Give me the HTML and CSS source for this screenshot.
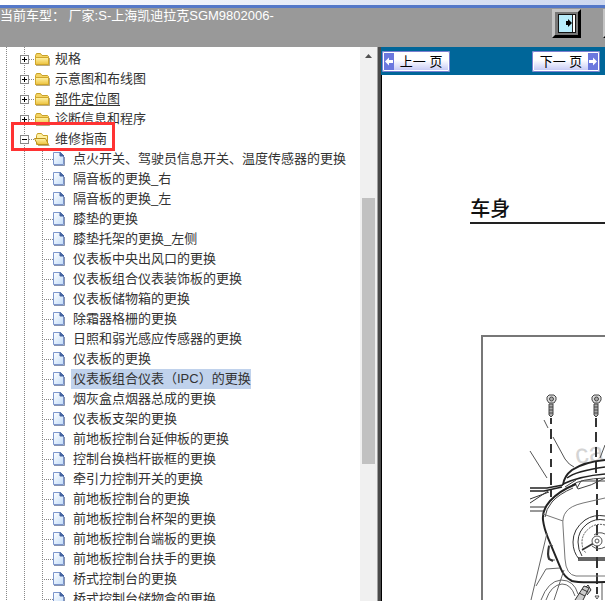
FILE: index.html
```html
<!DOCTYPE html>
<html lang="zh-CN">
<head>
<meta charset="utf-8">
<title>维修手册</title>
<link rel="stylesheet" href="styles.css">
</head>
<body>
<svg class="defs" aria-hidden="true">
  <defs>
    <linearGradient id="gold" x1="0" y1="0" x2="0" y2="1"><stop offset="0" stop-color="#fff3a8"/><stop offset="1" stop-color="#edc23c"/></linearGradient>
    <linearGradient id="paper" x1="0" y1="0" x2="1" y2="1"><stop offset="0" stop-color="#fff"/><stop offset="1" stop-color="#c3dcf8"/></linearGradient>
    <symbol id="folder" viewBox="0 0 16 14">
      <path d="M1.5 12.5v-9l1-2h4l1.5 2h5.500l1 1v8z" fill="#f3d364" stroke="#c9a227"/>
      <path d="M1.500 5.500h13v7h-13z" fill="url(#gold)" stroke="#d0a62a"/>
      <path d="M2 13.500h13.500V6" fill="none" stroke="#8a7230" stroke-opacity=".6"/>
    </symbol>
    <symbol id="folder-open" viewBox="0 0 16 14">
      <path d="M2.500 12.500v-9l1-2h4l1.500 2h4.500v9z" fill="#fff0a0" stroke="#c9a227"/>
      <path d="M.5 6.500h11l3 6h-11z" fill="url(#gold)" stroke="#b98f1c"/>
      <path d="M4 13.500h11.500" fill="none" stroke="#8a7230" stroke-opacity=".6"/>
    </symbol>
    <symbol id="page" viewBox="0 0 12 14">
      <path d="M.5.5h7l3 3v9H.5z" fill="url(#paper)" stroke="#7b95cc"/>
      <path d="M7 .5v3.500h4z" fill="#44639f" stroke="#44639f"/>
      <path d="M1 13.500h10.500V5" fill="none" stroke="#55658a" stroke-opacity=".7"/>
    </symbol>
  </defs>
</svg>
<div class="app">
  <div class="strip"></div>
  <header class="header">
    <p class="vehicle">当前车型： 厂家:S-上海凯迪拉克SGM9802006-</p>
    <div class="tools">
      <button class="tool" aria-label="退出">
        <svg width="18" height="19" viewBox="0 0 18 19"><path d="M0 0h18v19H0z" fill="#111"/><path d="M1 1h14v17H1z" fill="#b8ecfb"/><path d="M15 1h2v17h-2z" fill="#fff"/><path d="M14 1h1v17h-1z" fill="#222"/><path d="M8 7h2V5l4 4-4 4v-2H8z" fill="#000"/></svg>
      </button>
      <button class="tool" aria-label="帮助"></button>
    </div>
  </header>
  <main class="main">
    <nav class="tree-pane">
      <ul class="tree">
        <li><div class="row"><button class="toggle plus" aria-label="展开"></button><svg class="folder"><use href="#folder"/></svg><a href="#">规格</a></div></li>
        <li><div class="row"><button class="toggle plus" aria-label="展开"></button><svg class="folder"><use href="#folder"/></svg><a href="#">示意图和布线图</a></div></li>
        <li><div class="row"><button class="toggle plus" aria-label="展开"></button><svg class="folder"><use href="#folder"/></svg><a class="hover" href="#">部件定位图</a></div></li>
        <li><div class="row"><button class="toggle plus" aria-label="展开"></button><svg class="folder"><use href="#folder"/></svg><a href="#">诊断信息和程序</a></div></li>
        <li>
          <div class="row marked"><button class="toggle" aria-label="折叠"></button><svg class="folder"><use href="#folder-open"/></svg><a href="#">维修指南</a></div>
          <ul class="leaves">
            <li class="leaf"><svg class="page"><use href="#page"/></svg><a href="#">点火开关、驾驶员信息开关、温度传感器的更换</a></li>
            <li class="leaf"><svg class="page"><use href="#page"/></svg><a href="#">隔音板的更换_右</a></li>
            <li class="leaf"><svg class="page"><use href="#page"/></svg><a href="#">隔音板的更换_左</a></li>
            <li class="leaf"><svg class="page"><use href="#page"/></svg><a href="#">膝垫的更换</a></li>
            <li class="leaf"><svg class="page"><use href="#page"/></svg><a href="#">膝垫托架的更换_左侧</a></li>
            <li class="leaf"><svg class="page"><use href="#page"/></svg><a href="#">仪表板中央出风口的更换</a></li>
            <li class="leaf"><svg class="page"><use href="#page"/></svg><a href="#">仪表板组合仪表装饰板的更换</a></li>
            <li class="leaf"><svg class="page"><use href="#page"/></svg><a href="#">仪表板储物箱的更换</a></li>
            <li class="leaf"><svg class="page"><use href="#page"/></svg><a href="#">除霜器格栅的更换</a></li>
            <li class="leaf"><svg class="page"><use href="#page"/></svg><a href="#">日照和弱光感应传感器的更换</a></li>
            <li class="leaf"><svg class="page"><use href="#page"/></svg><a href="#">仪表板的更换</a></li>
            <li class="leaf"><svg class="page"><use href="#page"/></svg><a class="selected" href="#">仪表板组合仪表（IPC）的更换</a></li>
            <li class="leaf"><svg class="page"><use href="#page"/></svg><a href="#">烟灰盒点烟器总成的更换</a></li>
            <li class="leaf"><svg class="page"><use href="#page"/></svg><a href="#">仪表板支架的更换</a></li>
            <li class="leaf"><svg class="page"><use href="#page"/></svg><a href="#">前地板控制台延伸板的更换</a></li>
            <li class="leaf"><svg class="page"><use href="#page"/></svg><a href="#">控制台换档杆嵌框的更换</a></li>
            <li class="leaf"><svg class="page"><use href="#page"/></svg><a href="#">牵引力控制开关的更换</a></li>
            <li class="leaf"><svg class="page"><use href="#page"/></svg><a href="#">前地板控制台的更换</a></li>
            <li class="leaf"><svg class="page"><use href="#page"/></svg><a href="#">前地板控制台杯架的更换</a></li>
            <li class="leaf"><svg class="page"><use href="#page"/></svg><a href="#">前地板控制台端板的更换</a></li>
            <li class="leaf"><svg class="page"><use href="#page"/></svg><a href="#">前地板控制台扶手的更换</a></li>
            <li class="leaf"><svg class="page"><use href="#page"/></svg><a href="#">桥式控制台的更换</a></li>
            <li class="leaf"><svg class="page"><use href="#page"/></svg><a href="#">桥式控制台储物盒的更换</a></li>
          </ul>
        </li>
      </ul>
      <div class="scrollbar">
        <svg class="arrow" width="17" height="17" viewBox="0 0 17 17"><path d="M5 11l3.500-4 3.500 4z" fill="#505050"/></svg>
        <div class="track"><div class="thumb"></div></div>
      </div>
    </nav>
    <section class="doc">
      <div class="pager">
        <button class="nav"><svg class="cap" viewBox="0 0 10 17"><path d="M0 0h10v17H0z" fill="#6b78de"/><path d="M1 8.500l4-4v2.500h4v3H5v2.500z" fill="#fff"/></svg><span>上一 页</span></button>
        <button class="nav"><span>下一 页</span><svg class="cap" viewBox="0 0 10 17"><path d="M0 0h10v17H0z" fill="#6b78de"/><path d="M9 8.500l-4-4v2.500H1v3h4v2.500z" fill="#fff"/></svg></button>
      </div>
      <article class="sheet">
        <h1>车身</h1>
        <div class="figure">
          <svg width="122" height="263" viewBox="483 338 122 263" fill="none" stroke="#555" stroke-width="1">
            <g transform="rotate(-8 590 455)"><text class="watermark" x="575" y="463">ca</text></g>
            <g id="bolt" stroke="#444">
              <path d="M549 405h4v11l-2 2-2-2z" fill="#aaa"/><path d="M549 408h4M549 411h4M549 414h4"/>
              <path d="M547 398l2-2h5l2 2v3l-2 3h-5l-2-3z" fill="#ddd"/><circle cx="551.500" cy="400" r="2" fill="#aaa"/>
            </g>
            <use href="#bolt" x="45"/>
            <path d="M551 419v6M551 430v10M551 445v9M551 460v8M551 474v12M551 490v8" stroke="#333" stroke-width="2"/>
            <path d="M596 419v9M596 433v10M596 448v10M596 463v11M597 479v11M597 495v11M597 511v10M597 526v10M597 542v10M597 558v11M597 574v11M597 588v7" stroke="#333" stroke-width="2"/>
            <path d="M544 421l4 8M553 438l12 22q4 6 9 8M530 452l17 27M600 459l5-13"/>
            <path d="M563 486q1-9 9-15 12-8 33-10" stroke="#222" stroke-width="2"/>
            <path d="M567 479q9-7 38-11M563 485q17-8 42-10" stroke="#222" stroke-width="1.500"/>
            <path d="M572 486q8-6 33-7M577 489l4-7h24M575 484l3 6q13-3 27-11M565 488l11-7" stroke="#444"/>
            <path d="M530 489h17l16-3M530 492h14l18-4" stroke="#222" stroke-width="1.500"/>
            <path d="M530 500l19-7M530 504l18-12M530 508h16M530 512h14" stroke="#333"/>
            <path d="M576 485q-17 7-26 17-8 9-7 19 1 8 5 18l13 31q3 8 11 12 6 2 33 1" stroke="#222" stroke-width="2"/>
            <path d="M573 489q-14 6-21 14-6 7-7 15" stroke="#444"/>
            <path d="M605 499l-22 5q-13 3-17 9-4 5-3 14l2 33q1 16 11 17h29M543 515l20 7" stroke="#777"/>
            <path d="M605 517q-11-2-20 4-12 9-12 22 0 10 6 17M605 521q-10-2-18 4-9 7-9 18 0 8 4 14" stroke="#333"/>
            <path d="M605 526q-8-2-14 2-9 6-9 15 0 7 4 11" stroke="#555" stroke-dasharray="2 1"/>
            <path d="M578 559h27M578 561h27M582 551l12-7" stroke="#333" stroke-width="1.500"/>
            <circle cx="597" cy="542" r="5" fill="#fff"/><circle cx="597" cy="542" r="2"/>
            <path d="M605 535q-6-3-11 1M605 548q-7 4-13-1"/>
            <path d="M547 534l-16 67M536 587l10-17 14-1M549 546q-1 12 1 15h5M550 545l3 2" stroke="#666"/>
            <path d="M549 547q-2 9 0 13l4 2" stroke="#333" stroke-width="2"/>
            <path d="M541 601q7-19 20-20 13 0 17 14M546 601q5-15 16-16 9 0 13 12M564 571l-10 30" stroke="#666"/>
            <path d="M575 601l9-14 5 2-6 12M579 594l6 3M582 590l6 3M586 588l2-2 3 5-4 5" stroke="#333" fill="#ccc"/>
            <path d="M602 584v17M595 597l2 3 2-3z" stroke="#555"/>
          </svg>
        </div>
      </article>
    </section>
  </main>
</div>
</body>
</html>
```

FILE: styles.css
```css
*,
*::after {
  box-sizing: border-box;
}

body {
  margin: 0;
  background: #fff;
  color: #333;
  font: 13px/20px "Liberation Sans", "Noto Sans CJK SC", sans-serif;
}

button {
  margin: 0;
  padding: 0;
  font: inherit;
  color: inherit;
}

ul {
  margin: 0;
  padding: 0;
  list-style: none;
}

a {
  color: inherit;
  text-decoration: none;
}

svg {
  flex: none;
  display: block;
}

.defs {
  position: absolute;
  width: 0;
  height: 0;
}

.app {
  display: flex;
  flex-direction: column;
  height: 100vh;
  overflow: hidden;
}

.strip {
  flex: none;
  height: 8px;
  background: linear-gradient(90deg, #fff, #cdd8f0);
  border-bottom: 3px solid #5478c8;
}

.header {
  flex: none;
  display: flex;
  justify-content: space-between;
  height: 39px;
  background: #999;
  color: #fff;
  overflow: hidden;
}

.vehicle {
  margin: 0;
  line-height: 16px;
  white-space: nowrap;
}

.tools {
  display: flex;
  gap: 22px;
  width: 53px;
  padding-top: 1px;
}

.tool {
  flex: none;
  display: grid;
  place-items: center;
  width: 29px;
  height: 29px;
  background: #777;
  border: 3px solid #000;
  border-top-color: #c4c4c4;
  border-left-color: #c4c4c4;
}

.main {
  flex: 1;
  display: flex;
  min-height: 0;
}

.tree-pane {
  flex: none;
  display: flex;
  width: 63%;
  min-height: 0;
  border-right: 3px solid #4a4a4a;
  box-shadow: 1px 0 #000;
}

.tree {
  flex: 1;
  min-width: 0;
  overflow: hidden;
  padding: 2px 0 0 20px;
  background:
    repeating-linear-gradient(#888 0 1px, transparent 1px 2px) 6px 0 / 1px 100% no-repeat,
    repeating-linear-gradient(#888 0 1px, transparent 1px 2px) 24px 0 / 1px 100% no-repeat;
}

.row,
.leaf {
  position: relative;
  display: flex;
  align-items: center;
  height: 20px;
  white-space: nowrap;
}

.toggle {
  width: 9px;
  height: 9px;
  border: 1px solid #888;
  background: linear-gradient(#000, #000) 1px 3px / 5px 1px no-repeat, #fff;
}

.toggle.plus {
  background:
    linear-gradient(#000, #000) 1px 3px / 5px 1px no-repeat,
    linear-gradient(#000, #000) 3px 1px / 1px 5px no-repeat,
    #fff;
}

.folder {
  width: 21px;
  height: 14px;
  padding-left: 5px;
  background: repeating-linear-gradient(90deg, #888 0 1px, transparent 1px 2px) 0 7px / 6px 1px no-repeat;
}

.row a {
  margin-left: 5px;
}

.hover {
  text-decoration: underline;
  text-underline-offset: 2px;
}

.marked::after {
  content: "";
  position: absolute;
  left: -9px;
  top: -7px;
  width: 104px;
  height: 29px;
  border: 3px solid #f33;
}

.leaves {
  margin-left: 22px;
  background: repeating-linear-gradient(#888 0 1px, transparent 1px 2px) 0 0 / 1px 100% no-repeat;
}

.page {
  width: 23px;
  height: 14px;
  padding-left: 11px;
  background: repeating-linear-gradient(90deg, #888 0 1px, transparent 1px 2px) 0 7px / 11px 1px no-repeat;
}

.leaf a {
  margin-left: 6px;
  padding-left: 2px;
}

.leaf .selected {
  background: #c0d2ec;
}

.scrollbar {
  flex: none;
  display: flex;
  flex-direction: column;
  width: 18px;
  background: #f0f0f0;
  border-right: 1px solid #a0a0a0;
}

.track {
  flex: 1;
  display: grid;
  grid-template-rows: 134fr 266fr 137fr;
  padding: 0 2px;
}

.thumb {
  grid-row: 2;
  background: #c1c1c1;
}

.doc {
  flex: 1;
  min-width: 0;
  overflow: hidden;
}

.pager {
  display: flex;
  justify-content: space-between;
  height: 28px;
  padding: 4px 5px 3px 1px;
  background: #069;
}

.nav {
  display: flex;
  align-items: center;
  width: 68px;
  height: 21px;
  border: 2px solid #fff;
  outline: 1px solid #7a7fd0;
  outline-offset: -1px;
  border-radius: 2px;
  background: linear-gradient(#fff 40%, #c8ccf6);
  color: #000;
  white-space: nowrap;
}

.nav span {
  flex: 1;
  text-align: center;
}

.cap {
  width: 10px;
  height: 17px;
}

.sheet {
  padding: 120px 0 0 89px;
}

h1 {
  margin: 0;
  height: 29px;
  border-bottom: 2px solid #222;
  color: #111;
  font-size: 20px;
  font-weight: 500;
  line-height: 28px;
}

.figure {
  margin: 111px 0 0 11px;
  border: solid #777;
  border-width: 2px 0 0 2px;
}

.watermark {
  fill: #d4d4d4;
  stroke: none;
  font-size: 27px;
}
```
